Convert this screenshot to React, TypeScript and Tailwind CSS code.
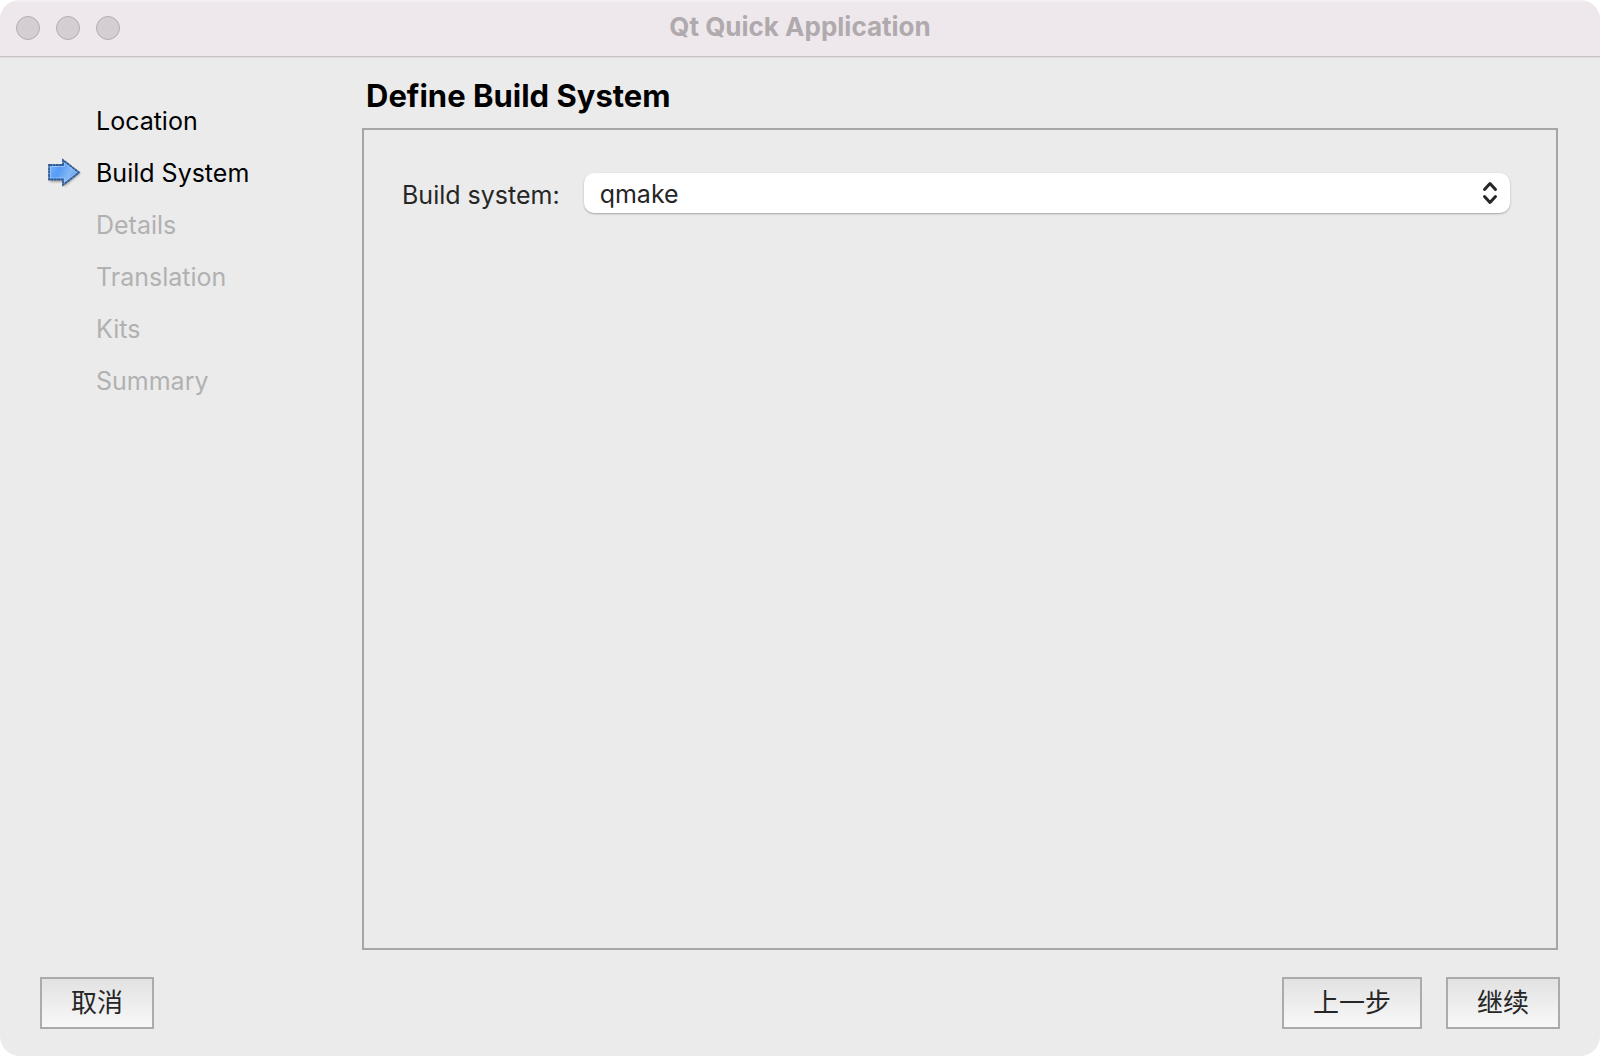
const steps = [
  { label: 'Location', state: 'done' },
  { label: 'Build System', state: 'current' },
  { label: 'Details', state: 'pending' },
  { label: 'Translation', state: 'pending' },
  { label: 'Kits', state: 'pending' },
  { label: 'Summary', state: 'pending' },
];

function StepArrow() {
  return (
    <svg width="36" height="36" viewBox="0 0 36 36" aria-hidden="true">
      <defs>
        <linearGradient id="arrow-fill" x1="0" y1="0.2" x2="1" y2="0.6">
          <stop offset="0" stopColor="#7db4fa" />
          <stop offset="0.35" stopColor="#559bf6" />
          <stop offset="0.7" stopColor="#84b8f6" />
          <stop offset="1" stopColor="#5b97e0" />
        </linearGradient>
        <filter id="arrow-shadow" x="-20%" y="-20%" width="140%" height="150%">
          <feGaussianBlur stdDeviation="1.2" />
        </filter>
      </defs>
      <path d="M2 12H16V5L32 18L16 31V26H2Z" fill="#000" opacity="0.3" filter="url(#arrow-shadow)" />
      <path d="M1 9H15V4L31 16.500L15 29V23.500H1Z" fill="url(#arrow-fill)" />
      <path d="M2.500 10.500H16.500V7L28.500 16.500L16.500 26V22H2.500Z" fill="none" stroke="#a5ccfb" strokeWidth="1" opacity="0.7" />
      <path
        d="M1 9H15V4L31 16.500L15 29V23.500H1Z"
        fill="none"
        stroke="#315b93"
        strokeWidth="1.800"
        strokeDasharray="3 0.400"
      />
    </svg>
  );
}

function WizardButton({ children }: { children: string }) {
  return (
    <button
      type="button"
      className="h-[52px] border-2 border-[#ababab] bg-linear-to-b from-[#e2e2e2] to-[#f8f8f8] px-[29px] text-[26px] leading-8 text-[#262626]"
    >
      {children}
    </button>
  );
}

export default function App() {
  return (
    <div className="min-h-screen bg-white font-['Inter','Noto_Sans_CJK_SC',sans-serif]">
      <div className="flex min-h-screen flex-col overflow-hidden rounded-[20px] bg-[#ebebeb]">
        <header className="grid h-[57px] grid-cols-[1fr_auto_1fr] items-center border-t-2 border-b border-t-[#f5f0f4] border-b-[#c8c2c6] bg-[#eee8ec] px-4 pb-0.5 shadow-[0_1px_0_#dedbdd]">
          <div className="flex gap-4">
            <button type="button" aria-label="Close" className="size-6 rounded-full border border-[#b3adb1] bg-[#d4ced2]" />
            <button type="button" aria-label="Minimize" className="size-6 rounded-full border border-[#b3adb1] bg-[#d4ced2]" />
            <button type="button" aria-label="Zoom" className="size-6 rounded-full border border-[#b3adb1] bg-[#d4ced2]" />
          </div>
          <h1 className="pb-0.5 text-[26px] leading-8 font-bold text-[#b0aaae]">Qt Quick Application</h1>
        </header>

        <div className="flex flex-1 pr-[42px]">
          <ol className="w-[362px] shrink-0 pt-[39px] pl-12 text-[25px]">
            {steps.map((step) => (
              <li
                key={step.label}
                aria-current={step.state === 'current' ? 'step' : undefined}
                className={
                  step.state === 'pending'
                    ? 'flex h-[52px] items-center text-[#b1b1b1]'
                    : 'flex h-[52px] items-center text-black'
                }
              >
                <span className="w-12 shrink-0">{step.state === 'current' && <StepArrow />}</span>
                {step.label}
              </li>
            ))}
          </ol>

          <main className="flex min-w-0 flex-1 flex-col">
            <h2 className="pt-[19px] pb-3 pl-1 text-[31px] leading-10 font-bold text-black">Define Build System</h2>
            <section className="flex-1 border-2 border-[#a6a6a6] pt-[43px] pr-[46px] pl-[38px]">
              <div className="flex items-center gap-6">
                <label htmlFor="build-system" className="pt-1 text-[25px] leading-9 text-[#262626]">
                  Build system:
                </label>
                <div className="relative min-w-0 flex-1">
                  <select
                    id="build-system"
                    defaultValue="qmake"
                    className="block h-10 w-full appearance-none rounded-[10px] bg-white px-4 pt-0.5 text-[25px] leading-9 text-[#262626] shadow-[0_1px_2px_rgba(0,0,0,0.3)]"
                  >
                    <option value="qmake">qmake</option>
                    <option value="cmake">CMake</option>
                    <option value="qbs">Qbs</option>
                  </select>
                  <svg
                    className="pointer-events-none absolute top-2 right-3"
                    width="16"
                    height="24"
                    viewBox="0 0 16 24"
                    fill="none"
                    stroke="#262626"
                    strokeWidth="3"
                    strokeLinecap="round"
                    strokeLinejoin="round"
                    aria-hidden="true"
                  >
                    <path d="M2.500 8.500L8 2.500L13.500 8.500M2.500 15.500L8 21.500L13.500 15.500" />
                  </svg>
                </div>
              </div>
            </section>
          </main>
        </div>

        <footer className="flex justify-between px-10 py-[27px]">
          <WizardButton>取消</WizardButton>
          <div className="flex gap-6">
            <WizardButton>上一步</WizardButton>
            <WizardButton>继续</WizardButton>
          </div>
        </footer>
      </div>
    </div>
  );
}
